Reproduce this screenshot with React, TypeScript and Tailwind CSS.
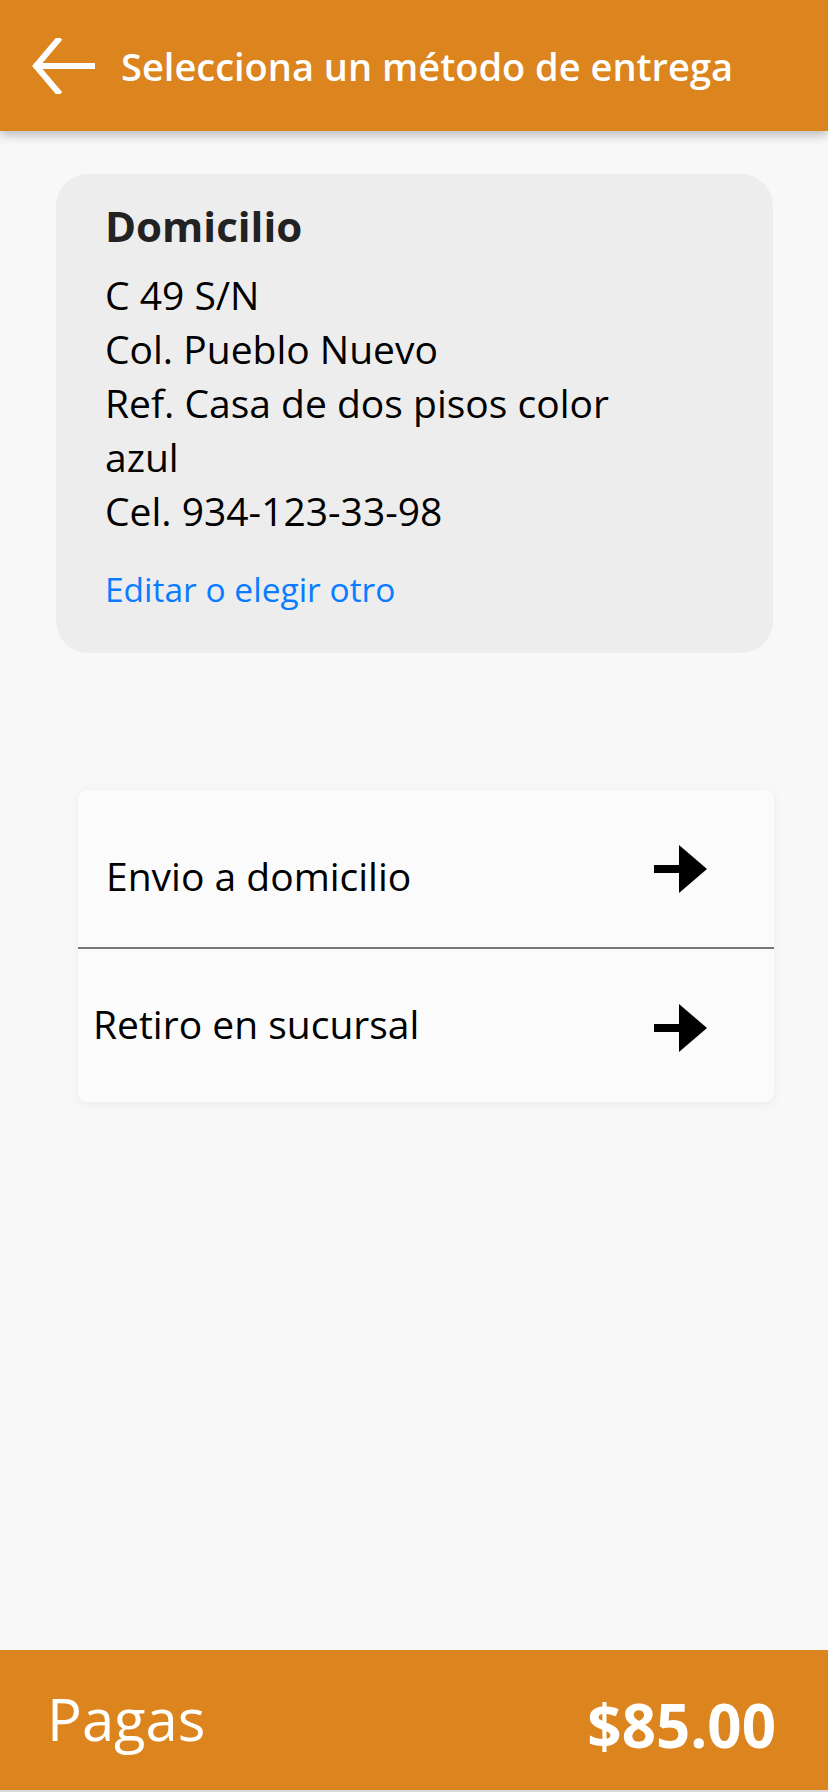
import React from "react";

function BackArrow() {
  return (
    <svg width="64" height="56" viewBox="0 0 64 56" className="shrink-0">
      <polyline points="27,2 5,28 27,54" fill="none" stroke="#ffffff" strokeWidth="6" strokeLinecap="square" strokeLinejoin="miter" />
      <rect x="3" y="25" width="61" height="6" fill="#ffffff" />
    </svg>
  );
}

function ForwardArrow() {
  return (
    <svg width="54" height="48" viewBox="0 0 54 48" className="shrink-0">
      <rect x="0" y="20" width="28" height="8" fill="#000" />
      <polygon points="25,0 53,24 25,48" fill="#000" />
    </svg>
  );
}

export default function App() {
  return (
    <div
      className="w-[828px] h-[1792px] bg-[#f8f8f8] flex flex-col overflow-hidden"
      style={{ fontFamily: "'Open Sans', 'Noto Sans', sans-serif" }}
    >
      <header className="h-[131px] shrink-0 bg-[#dc841d] flex items-center pl-[31px] shadow-[0_4px_10px_rgba(0,0,0,0.25)] relative z-10">
        <BackArrow />
        <h1 className="ml-[26px] text-white text-[38px] font-semibold leading-none">
          Selecciona un método de entrega
        </h1>
      </header>

      <main className="flex-1 flex flex-col">
        <section className="mt-[43px] ml-[56px] w-[717px] h-[479px] bg-[#ededed] rounded-[32px] pl-[49px] pt-[28px] flex flex-col">
          <h2 className="text-[42px] leading-[48px] font-bold text-[#222]">Domicilio</h2>
          <div className="mt-[18px] text-[39px] leading-[54px] text-black">
            <p>C 49 S/N</p>
            <p>Col. Pueblo Nuevo</p>
            <p>Ref. Casa de dos pisos color</p>
            <p>azul</p>
            <p>Cel. 934-123-33-98</p>
          </div>
          <a className="mt-[31px] text-[33.5px] leading-[40px] text-[#0a7cff]">Editar o elegir otro</a>
        </section>

        <section className="mt-[137px] ml-[78px] w-[696px] bg-[#fbfbfb] rounded-[9px] shadow-[0_2px_10px_rgba(0,0,0,0.06)] flex flex-col">
          <div className="h-[157px] flex items-center justify-between pl-[28px] pr-[66px]">
            <span className="mt-[14px] text-[39px] leading-none text-black">Envio a domicilio</span>
            <ForwardArrow />
          </div>
          <div className="h-[2px] bg-[#777]" />
          <div className="h-[153px] flex items-center justify-between pl-[15px] pr-[66px]">
            <span className="mb-[5px] text-[39px] leading-none text-black">Retiro en sucursal</span>
            <span className="mt-[5px]"><ForwardArrow /></span>
          </div>
        </section>
      </main>

      <footer className="h-[140px] shrink-0 bg-[#dc841d] flex items-center justify-between pl-[47px] pr-[52px]">
        <span className="mb-[3px] text-[58px] leading-none text-white">Pagas</span>
        <span className="mt-[10px] text-[60px] leading-none font-bold text-white">$85.00</span>
      </footer>
      <div className="h-[2px] shrink-0 bg-[#d9d9d9]" />
    </div>
  );
}
